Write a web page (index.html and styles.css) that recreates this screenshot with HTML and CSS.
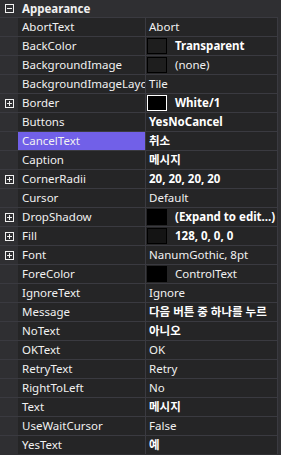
FILE: index.html
```html
<!DOCTYPE html>
<html lang="ko">
<head>
    <meta charset="UTF-8">
    <title>Properties</title>
    <link rel="stylesheet" href="styles.css">
</head>
<body>
<div class="grid">
    <div class="category">
        <span class="gutter"><svg class="toggle" width="9" height="9" viewBox="0 0 9 9"><rect x="0.5" y="0.5" width="8" height="8" fill="none" stroke="#f1f1f1"/><path d="M2 4.5h5" stroke="#f1f1f1"/></svg></span>
        <span class="title">Appearance</span>
    </div>

    <div class="row"><span class="gutter"></span><span class="name">AbortText</span><span class="value">Abort</span></div>
    <div class="row"><span class="gutter"></span><span class="name">BackColor</span><span class="value"><i class="swatch"></i><b>Transparent</b></span></div>
    <div class="row"><span class="gutter"></span><span class="name">BackgroundImage</span><span class="value"><i class="swatch"></i>(none)</span></div>
    <div class="row"><span class="gutter"></span><span class="name">BackgroundImageLayo</span><span class="value">Tile</span></div>
    <div class="row"><span class="gutter"><svg class="toggle" width="9" height="9" viewBox="0 0 9 9"><rect x="0.5" y="0.5" width="8" height="8" fill="none" stroke="#f1f1f1"/><path d="M2 4.5h5M4.5 2v5" stroke="#f1f1f1"/></svg></span><span class="name">Border</span><span class="value"><i class="swatch white"></i><b>White/1</b></span></div>
    <div class="row"><span class="gutter"></span><span class="name">Buttons</span><span class="value"><b>YesNoCancel</b></span></div>
    <div class="row selected"><span class="gutter"></span><span class="name">CancelText</span><span class="value"><b>취소</b></span></div>
    <div class="row"><span class="gutter"></span><span class="name">Caption</span><span class="value"><b>메시지</b></span></div>
    <div class="row"><span class="gutter"><svg class="toggle" width="9" height="9" viewBox="0 0 9 9"><rect x="0.5" y="0.5" width="8" height="8" fill="none" stroke="#f1f1f1"/><path d="M2 4.5h5M4.5 2v5" stroke="#f1f1f1"/></svg></span><span class="name">CornerRadii</span><span class="value"><b>20, 20, 20, 20</b></span></div>
    <div class="row"><span class="gutter"></span><span class="name">Cursor</span><span class="value">Default</span></div>
    <div class="row"><span class="gutter"><svg class="toggle" width="9" height="9" viewBox="0 0 9 9"><rect x="0.5" y="0.5" width="8" height="8" fill="none" stroke="#f1f1f1"/><path d="M2 4.5h5M4.5 2v5" stroke="#f1f1f1"/></svg></span><span class="name">DropShadow</span><span class="value"><i class="swatch black"></i><b>(Expand to edit...)</b></span></div>
    <div class="row"><span class="gutter"><svg class="toggle" width="9" height="9" viewBox="0 0 9 9"><rect x="0.5" y="0.5" width="8" height="8" fill="none" stroke="#f1f1f1"/><path d="M2 4.5h5M4.5 2v5" stroke="#f1f1f1"/></svg></span><span class="name">Fill</span><span class="value"><i class="swatch dark"></i><b>128, 0, 0, 0</b></span></div>
    <div class="row"><span class="gutter"><svg class="toggle" width="9" height="9" viewBox="0 0 9 9"><rect x="0.5" y="0.5" width="8" height="8" fill="none" stroke="#f1f1f1"/><path d="M2 4.5h5M4.5 2v5" stroke="#f1f1f1"/></svg></span><span class="name">Font</span><span class="value">NanumGothic, 8pt</span></div>
    <div class="row"><span class="gutter"></span><span class="name">ForeColor</span><span class="value"><i class="swatch black"></i>ControlText</span></div>
    <div class="row"><span class="gutter"></span><span class="name">IgnoreText</span><span class="value">Ignore</span></div>
    <div class="row"><span class="gutter"></span><span class="name">Message</span><span class="value"><b>다음 버튼 중 하나를 누르</b></span></div>
    <div class="row"><span class="gutter"></span><span class="name">NoText</span><span class="value"><b>아니오</b></span></div>
    <div class="row"><span class="gutter"></span><span class="name">OKText</span><span class="value">OK</span></div>
    <div class="row"><span class="gutter"></span><span class="name">RetryText</span><span class="value">Retry</span></div>
    <div class="row"><span class="gutter"></span><span class="name">RightToLeft</span><span class="value">No</span></div>
    <div class="row"><span class="gutter"></span><span class="name">Text</span><span class="value"><b>메시지</b></span></div>
    <div class="row"><span class="gutter"></span><span class="name">UseWaitCursor</span><span class="value">False</span></div>
    <div class="row"><span class="gutter"></span><span class="name">YesText</span><span class="value"><b>예</b></span></div>
</div>
</body>
</html>
```

FILE: styles.css
```css
body {
    margin: 0;
    background-color: #2f2f32;
    font-family: 'Noto Sans', 'Noto Sans CJK KR', sans-serif;
    font-size: 11.5px;
    color: #f1f1f1;
}

.grid {
    width: 278px;
    display: flex;
    flex-direction: column;
}

.category {
    display: grid;
    grid-template-columns: 18px 1fr;
    height: 17px;
    line-height: 17px;
}

.title {
    padding-left: 4px;
    font-weight: bold;
}

.gutter {
    display: flex;
    align-items: center;
    justify-content: center;
}

.row {
    display: grid;
    grid-template-columns: 18px 128px 1fr;
    height: 18px;
    line-height: 18px;
    border-top: 1px solid #3a3a40;
}

.name,
.value {
    background-color: #252526;
    white-space: nowrap;
    overflow: hidden;
}

.name {
    padding-left: 4px;
    border-right: 1px solid #3a3a40;
}

.value {
    display: flex;
    align-items: center;
    padding-left: 3px;
    border-right: 1px solid #3a3a40;
}

.value b {
    color: #ffffff;
}

.selected .name {
    background-color: #7160e8;
}

.swatch {
    flex: none;
    width: 18px;
    height: 14px;
    margin-left: -2px;
    margin-right: 8px;
    border: 1px solid #000;
    background-color: #1e1e1e;
}

.swatch.white {
    border-color: #fff;
    background-color: #000;
}

.swatch.black {
    background-color: #000;
}

.swatch.dark {
    background-color: #141414;
}
```
